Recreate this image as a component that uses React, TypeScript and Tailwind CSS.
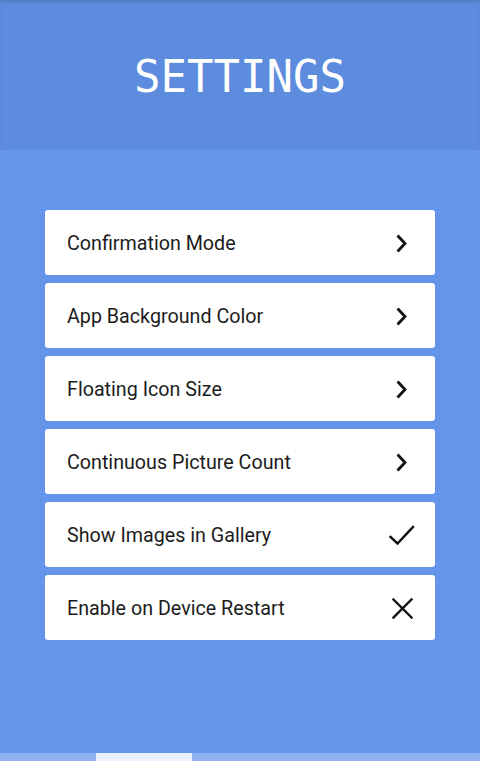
import React from 'react';

type Item = { label: string; icon: 'chevron' | 'check' | 'cross' };

const items: Item[] = [
  { label: 'Confirmation Mode', icon: 'chevron' },
  { label: 'App Background Color', icon: 'chevron' },
  { label: 'Floating Icon Size', icon: 'chevron' },
  { label: 'Continuous Picture Count', icon: 'chevron' },
  { label: 'Show Images in Gallery', icon: 'check' },
  { label: 'Enable on Device Restart', icon: 'cross' },
];

const Icon: React.FC<{ kind: Item['icon'] }> = ({ kind }) => {
  if (kind === 'chevron') {
    return (
      <svg width="28" height="28" viewBox="0 0 28 28" fill="none" stroke="#111" strokeWidth="2.8" strokeLinecap="square">
        <path d="M11.5 7.5 L18 14.5 L11.5 21.5" />
      </svg>
    );
  }
  if (kind === 'check') {
    return (
      <svg width="28" height="28" viewBox="0 0 28 28" fill="none" stroke="#111" strokeWidth="2.4" strokeLinecap="square">
        <path d="M3.5 16 L10.5 22.5 L26 6" />
      </svg>
    );
  }
  return (
    <svg width="28" height="28" viewBox="0 0 28 28" fill="none" stroke="#111" strokeWidth="2.4" strokeLinecap="square">
      <path d="M6.5 5.5 L24.5 23.5 M24.5 5.5 L6.5 23.5" />
    </svg>
  );
};

export default function App() {
  return (
    <div className="w-[480px] h-[761px] flex flex-col bg-[#6595eb] overflow-hidden">
      <header className="h-[150px] shrink-0 bg-[#5d8cdf] flex items-center justify-center shadow-[inset_0_2px_2px_rgba(0,0,0,0.12)]">
        <h1 className="text-[44px] text-white font-['DejaVu_Sans_Mono',monospace] leading-none pt-[4px]">
          SETTINGS
        </h1>
      </header>

      <main className="flex-1 flex flex-col gap-[8px] px-[45px] pt-[60px]">
        {items.map((item) => (
          <div
            key={item.label}
            className="h-[65px] bg-white rounded-[3px] flex items-center justify-between pl-[22px] pr-[20px]"
          >
            <span className="pt-[3px] text-[19.7px] text-[#1c1c1c] font-['Roboto',sans-serif]">{item.label}</span>
            <Icon kind={item.icon} />
          </div>
        ))}
      </main>

      <div className="h-[8px] shrink-0 flex bg-[#8fb1f3]">
        <div className="ml-[96px] w-[96px] bg-[#eaf0fd]" />
      </div>
    </div>
  );
}
